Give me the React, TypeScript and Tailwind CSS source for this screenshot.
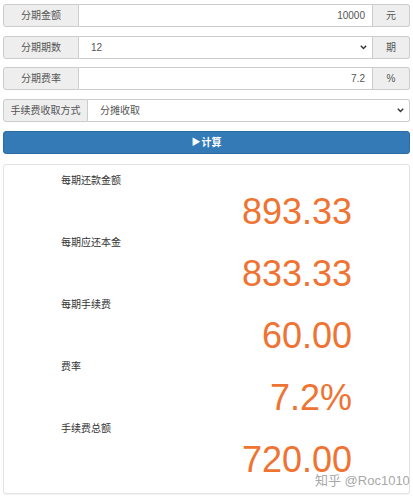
import React from "react";

const cjk = { fontFamily: '"Liberation Sans", "Noto Sans CJK SC", sans-serif' };

function Chevron() {
  return (
    <svg width="7" height="5" viewBox="0 0 7 5" className="shrink-0">
      <path d="M0.8 0.8 L3.5 3.6 L6.2 0.8" fill="none" stroke="#333" strokeWidth="1.4" />
    </svg>
  );
}

function Row({ label, labelW, value, align, addon, select }: { label: string; labelW: string; value: string; align: "left" | "right"; addon?: string; select?: boolean }) {
  return (
    <div className="flex h-[23px] text-[10px] text-[#555]">
      <div className={`${labelW} shrink-0 flex items-center justify-center bg-[#eeeeee] border border-[#cccccc] rounded-l-[3px]`}>{label}</div>
      <div className={`flex-1 flex items-center border-y border-r border-[#cccccc] bg-white ${addon ? "" : "rounded-r-[3px]"} ${align === "right" ? "justify-end pr-[7px]" : "justify-between pl-[12px] pr-[5px]"}`}>
        <span>{value}</span>
        {select && <Chevron />}
      </div>
      {addon && (
        <div className="w-[37px] shrink-0 flex items-center justify-center bg-[#eeeeee] border-y border-r border-[#cccccc] rounded-r-[3px]">{addon}</div>
      )}
    </div>
  );
}

const results = [
  ["每期还款金额", "893.33"],
  ["每期应还本金", "833.33"],
  ["每期手续费", "60.00"],
  ["费率", "7.2%"],
  ["手续费总额", "720.00"],
];

export default function App() {
  return (
    <div className="relative w-[413px] h-[500px] bg-white overflow-hidden" style={cjk}>
      <div className="pt-[4px] pl-[3px] pr-[3px] flex flex-col gap-[8.7px]">
        <Row label="分期金额" labelW="w-[76px]" value="10000" align="right" addon="元" />
        <div className="flex h-[23px] text-[10px] text-[#555]">
          <div className="w-[76px] shrink-0 flex items-center justify-center bg-[#eeeeee] border border-[#cccccc] rounded-l-[3px]">分期期数</div>
          <div className="flex-1 flex items-center justify-between pl-[12px] pr-[5px] border-y border-r border-[#cccccc] bg-white">
            <span>12</span>
            <Chevron />
          </div>
          <div className="w-[37px] shrink-0 flex items-center justify-center bg-[#eeeeee] border-y border-r border-[#cccccc] rounded-r-[3px]">期</div>
        </div>
        <Row label="分期费率" labelW="w-[76px]" value="7.2" align="right" addon="%" />
        <Row label="手续费收取方式" labelW="w-[85px]" value="分摊收取" align="left" select />
        <div className="h-[23px] flex items-center justify-center bg-[#337ab7] border border-[#2e6da4] rounded-[3px] text-white text-[10px] font-bold">
          <span className="text-[9px] mr-[1px]">▶</span>计算
        </div>
      </div>
      <div className="mt-[10px] mx-[3px] h-[330px] border border-[#e3e3e3] rounded-[3px] bg-white shadow-[0_1px_1px_rgba(0,0,0,0.05)] pt-[6px] px-[57px]">
        {results.map(([l, v]) => (
          <div key={l} className="flex flex-col">
            <div className="h-[20px] leading-[20px] text-[10px] text-[#333]">{l}</div>
            <div className="h-[42px] leading-[42px] text-[36px] text-[#ef7332] text-right" style={{ fontFamily: '"Liberation Sans", Arial, sans-serif' }}>{v}</div>
          </div>
        ))}
      </div>
      <div className="absolute left-[315px] top-[471px] text-[13px] text-[#a8a8a8] whitespace-nowrap [text-shadow:0_0_2px_#fff]">知乎 @Roc1010</div>
    </div>
  );
}
